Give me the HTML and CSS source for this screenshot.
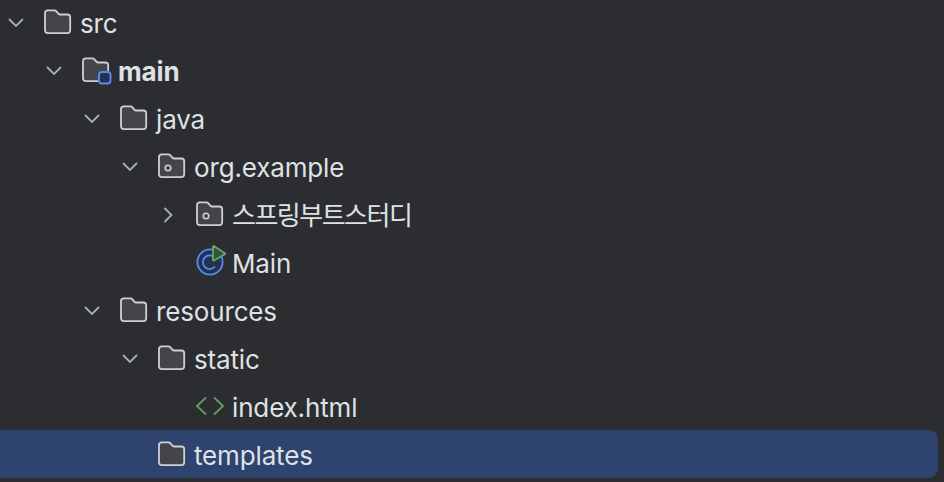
FILE: index.html
```html
<!DOCTYPE html>
<html lang="en">
<head>
    <meta charset="UTF-8">
    <meta name="viewport" content="width=device-width, initial-scale=1.0">
    <title>Project Tree</title>
    <link rel="stylesheet" href="styles.css">
</head>
<body>
    <svg class="defs" width="0" height="0">
        <symbol id="folder" viewBox="0 0 28 28">
            <path class="folder-shape" d="M1 4.200a2.800 2.800 0 0 1 2.800-2.800h6.600c.8 0 1.500.3 2 .9l2 2.300c.5.600 1.200.9 2 .9h7a2.800 2.800 0 0 1 2.800 2.800v13a2.800 2.800 0 0 1-2.800 2.800H3.800A2.800 2.800 0 0 1 1 21.500z"/>
        </symbol>
        <symbol id="chevron-down" viewBox="0 0 16 10">
            <path class="chevron-shape" d="M1 1l7 7 7-7"/>
        </symbol>
        <symbol id="chevron-right" viewBox="0 0 10 16">
            <path class="chevron-shape" d="M1.500 1l7 7-7 7"/>
        </symbol>
    </svg>

    <ul class="tree">
        <li class="row depth-0">
            <svg class="arrow arrow-down"><use href="#chevron-down"/></svg>
            <svg class="icon"><use href="#folder"/></svg>
            <span class="name">src</span>
        </li>
        <li class="row depth-1">
            <svg class="arrow arrow-down"><use href="#chevron-down"/></svg>
            <svg class="icon" viewBox="0 0 28 28">
                <use href="#folder"/>
                <rect class="badge-gap" x="16" y="14" width="13.500" height="13.500" rx="4"/>
                <rect class="badge" x="17" y="15" width="11.500" height="11.500" rx="3"/>
            </svg>
            <span class="name name-bold">main</span>
        </li>
        <li class="row depth-2">
            <svg class="arrow arrow-down"><use href="#chevron-down"/></svg>
            <svg class="icon"><use href="#folder"/></svg>
            <span class="name">java</span>
        </li>
        <li class="row depth-3">
            <svg class="arrow arrow-down"><use href="#chevron-down"/></svg>
            <svg class="icon" viewBox="0 0 28 28">
                <use href="#folder"/>
                <circle class="package-dot" cx="10" cy="15" r="2.800"/>
            </svg>
            <span class="name">org.example</span>
        </li>
        <li class="row depth-4">
            <svg class="arrow arrow-side"><use href="#chevron-right"/></svg>
            <svg class="icon" viewBox="0 0 28 28">
                <use href="#folder"/>
                <circle class="package-dot" cx="10" cy="15" r="2.800"/>
            </svg>
            <span class="name name-korean">스프링부트스터디</span>
        </li>
        <li class="row depth-4">
            <span class="arrow"></span>
            <svg class="icon" viewBox="0 0 28 28">
                <circle class="class-ring" cx="14" cy="13" r="12.600"/>
                <path class="class-letter" d="M19 9a6.800 6.800 0 1 0 0 8.500"/>
                <path class="run-badge" d="M17 -2.500v13.500a.6.6 0 0 0 .9.500l11-6.300a.6.6 0 0 0 0-1l-11-7.200a.6.6 0 0 0-.9.500z"/>
            </svg>
            <span class="name">Main</span>
        </li>
        <li class="row depth-2">
            <svg class="arrow arrow-down"><use href="#chevron-down"/></svg>
            <svg class="icon"><use href="#folder"/></svg>
            <span class="name">resources</span>
        </li>
        <li class="row depth-3">
            <svg class="arrow arrow-down"><use href="#chevron-down"/></svg>
            <svg class="icon"><use href="#folder"/></svg>
            <span class="name">static</span>
        </li>
        <li class="row depth-4">
            <span class="arrow"></span>
            <svg class="icon" viewBox="0 0 28 28">
                <path class="html-tag" d="M10 4.500l-9 8.500 9 8.500M18 4.500l9 8.500-9 8.500"/>
            </svg>
            <span class="name">index.html</span>
        </li>
        <li class="row depth-3 selected">
            <span class="arrow"></span>
            <svg class="icon"><use href="#folder"/></svg>
            <span class="name">templates</span>
        </li>
    </ul>
</body>
</html>
```

FILE: styles.css
```css
/* Page */
body {
    margin: 0;
    height: 482px;
    overflow: hidden;
    background: #2b2d30;
    color: #dfe1e5;
    font-family: 'Inter', 'Noto Sans CJK KR', sans-serif;
    font-size: 26px;
}

.defs {
    display: block;
}

/* Tree rows */
.tree {
    list-style: none;
    margin: -2px 6px 0 0;
    padding: 0;
}

.row {
    display: flex;
    align-items: center;
    height: 48px;
}

.depth-0 { padding-left: 0; }
.depth-1 { padding-left: 38px; }
.depth-2 { padding-left: 76px; }
.depth-3 { padding-left: 114px; }
.depth-4 { padding-left: 152px; }

.selected {
    background: #2e436e;
    border-radius: 0 9px 9px 0;
}

.name {
    margin: 2px 0 0 8px;
    white-space: nowrap;
    letter-spacing: -0.15px;
}

.name-bold {
    font-weight: 700;
}

.name-korean {
    margin-top: -1px;
    letter-spacing: -1.5px;
}

/* Icons */
.arrow {
    flex: none;
    width: 44px;
    height: 28px;
}

.arrow-down {
    width: 16px;
    height: 10px;
    margin: 2px 20px 0 8px;
}

.arrow-side {
    width: 10px;
    height: 16px;
    margin: 2px 23px 0 11px;
}

.icon {
    flex: none;
    width: 28px;
    height: 28px;
    margin-top: 2px;
    overflow: visible;
}

.folder-shape {
    fill: #43454a;
    stroke: #ced0d6;
    stroke-width: 1.800;
}

.chevron-shape {
    fill: none;
    stroke: #a8adbd;
    stroke-width: 1.800;
}

.badge-gap {
    fill: #2b2d30;
}

.badge {
    fill: #25324d;
    stroke: #548af7;
    stroke-width: 1.900;
}

.package-dot {
    fill: none;
    stroke: #ced0d6;
    stroke-width: 1.600;
}

.class-ring {
    fill: #25324d;
    stroke: #548af7;
    stroke-width: 1.800;
}

.class-letter {
    fill: none;
    stroke: #548af7;
    stroke-width: 1.800;
}

.run-badge {
    fill: #375239;
    stroke: #5fad65;
    stroke-width: 1.700;
}

.html-tag {
    fill: none;
    stroke: #5f9e5c;
    stroke-width: 1.900;
}
```
